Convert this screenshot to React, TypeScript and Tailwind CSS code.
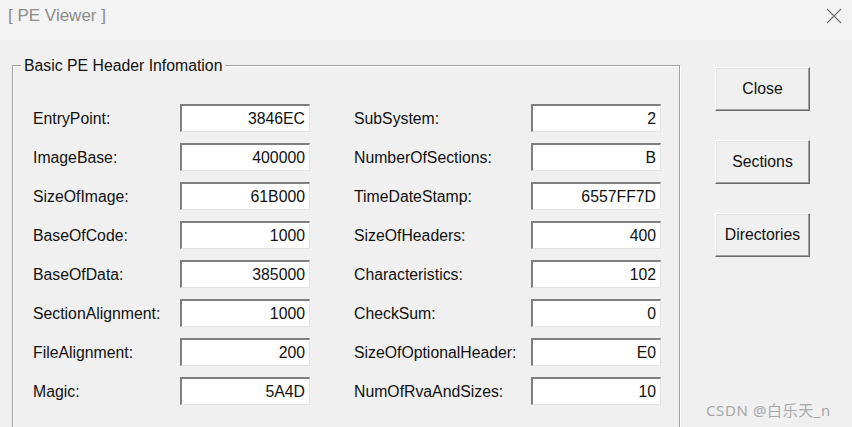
import React from 'react';

const left: [string, string][] = [
  ['EntryPoint:', '3846EC'],
  ['ImageBase:', '400000'],
  ['SizeOfImage:', '61B000'],
  ['BaseOfCode:', '1000'],
  ['BaseOfData:', '385000'],
  ['SectionAlignment:', '1000'],
  ['FileAlignment:', '200'],
  ['Magic:', '5A4D'],
];

const right: [string, string][] = [
  ['SubSystem:', '2'],
  ['NumberOfSections:', 'B'],
  ['TimeDateStamp:', '6557FF7D'],
  ['SizeOfHeaders:', '400'],
  ['Characteristics:', '102'],
  ['CheckSum:', '0'],
  ['SizeOfOptionalHeader:', 'E0'],
  ['NumOfRvaAndSizes:', '10'],
];

const Field: React.FC<{ label: string; value: string; labelW: string }> = ({ label, value, labelW }) => (
  <div className="flex items-center h-[28px]">
    <span className={`${labelW} shrink-0 pt-[2px]`}>{label}</span>
    <div className="w-[130px] h-[28px] bg-white border-t-2 border-l-2 border-b border-r border-t-[#7f7f7f] border-l-[#7f7f7f] border-b-[#e3e3e3] border-r-[#e3e3e3] flex items-center justify-end pr-[4px] pt-[1px]">
      {value}
    </div>
  </div>
);

const WinButton: React.FC<{ children: React.ReactNode }> = ({ children }) => (
  <button className="w-[95px] h-[44px] bg-[#f0f0f0] border border-t-white border-l-white border-r-[#696969] border-b-[#696969] shadow-[inset_-1px_-1px_0_#a0a0a0,inset_1px_1px_0_#e3e3e3] text-[15.8px] text-[#111]">
    {children}
  </button>
);

export default function App() {
  return (
    <div className="relative w-[852px] h-[427px] overflow-hidden bg-[#f0f0f0] text-[15.8px] text-[#111] font-['Liberation_Sans',Arial,sans-serif]">
      <div className="h-[38px] bg-[#f3f3f3] flex items-center justify-between pl-[8px] pr-[10px]">
        <span className="text-[17px] text-[#8c8c8c] -mt-[6px]">[ PE Viewer ]</span>
        <svg width="16" height="16" viewBox="0 0 16 16" className="-mt-[6px]">
          <path d="M1 1 L15 15 M15 1 L1 15" stroke="#707070" strokeWidth="1.1" fill="none" />
        </svg>
      </div>
      <div className="flex items-start pl-[12px]">
        <div className="relative mt-[27px] w-[668px] h-[400px] border border-[#a0a0a0] shadow-[inset_1px_1px_0_#fff,1px_1px_0_#fff] pl-[20px] pt-[38px]">
          <span className="absolute -top-[9px] left-[8px] px-[3px] bg-[#f0f0f0] leading-[18px]">
            Basic PE Header Infomation
          </span>
          <div className="flex gap-[44px]">
            <div className="flex flex-col gap-[11px]">
              {left.map(([l, v]) => (
                <Field key={l} label={l} value={v} labelW="w-[147px]" />
              ))}
            </div>
            <div className="flex flex-col gap-[11px]">
              {right.map(([l, v]) => (
                <Field key={l} label={l} value={v} labelW="w-[177px]" />
              ))}
            </div>
          </div>
        </div>
        <div className="ml-[35px] mt-[29px] flex flex-col gap-[29px]">
          <WinButton>Close</WinButton>
          <WinButton>Sections</WinButton>
          <WinButton>Directories</WinButton>
        </div>
      </div>
      <span className="absolute left-[706px] top-[400px] text-[15px] tracking-[0.6px] leading-[20px] text-[#a8a8a8] font-['Noto_Sans','Noto_Sans_CJK_SC',sans-serif]">
        CSDN @白乐天_n
      </span>
    </div>
  );
}
